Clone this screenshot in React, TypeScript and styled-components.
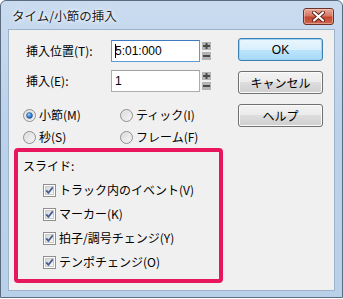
import React from "react";
import styled, { createGlobalStyle } from "styled-components";

const Global = createGlobalStyle`
  html, body { margin: 0; padding: 0; background: #ffffff; }
  body { font-family: "Noto Sans CJK JP", "Noto Sans", sans-serif; }
`;

const FONT = `"Noto Sans CJK JP", "Noto Sans", sans-serif`;

const Window = styled.div`
  box-sizing: border-box;
  width: 343px;
  height: 298px;
  display: flex;
  flex-direction: column;
  border: 1px solid #5b6b80;
  border-radius: 6px 6px 0 0;
  background: linear-gradient(to bottom, #c9dbef 0%, #bcd2ea 40%, #b9d0e9 100%);
`;

const TitleBar = styled.div`
  height: 28px;
  flex: none;
  display: flex;
  align-items: center;
  justify-content: space-between;
  padding: 0 8px 0 11px;
`;

const Title = styled.span`
  font-family: ${FONT};
  font-size: 12.5px;
  line-height: 16px;
  color: #1e1e1e;
  margin-top: 2px;
  text-shadow: 0 0 6px #ffffff, 0 0 3px #ffffff;
`;

const CloseButton = styled.div`
  box-sizing: border-box;
  width: 31px;
  height: 17px;
  margin-top: 2px;
  border: 1px solid #6b3229;
  border-radius: 3px;
  background: linear-gradient(to bottom, #e9a99b 0%, #d67763 45%, #c4452e 55%, #cf6650 100%);
  box-shadow: inset 0 0 0 1px rgba(255, 220, 210, 0.45);
  display: flex;
  align-items: center;
  justify-content: center;
`;

const Client = styled.div`
  flex: 1;
  margin: 0 7px 6px 7px;
  border: 1px solid #9fb3ca;
  background: #f0f0f0;
  display: flex;
  flex-direction: row;
  font-family: ${FONT};
  font-size: 12px;
  color: #000;
`;

const LeftCol = styled.div`
  width: 209px;
  padding: 10px 0 0 5px;
  display: flex;
  flex-direction: column;
`;

const FieldRow = styled.div<{ $top?: number }>`
  display: flex;
  align-items: center;
  height: 22px;
  margin-top: ${(p) => p.$top ?? 0}px;
  padding-left: 12px;
`;

const Label = styled.span`
  width: 85px;
  line-height: 16px;
  white-space: nowrap;
`;

const Input = styled.div<{ $focused?: boolean }>`
  box-sizing: border-box;
  width: 89px;
  height: 22px;
  background: #ffffff;
  border: 1px solid ${(p) => (p.$focused ? "#5b9bd8" : "#abadb3")};
  border-top-color: ${(p) => (p.$focused ? "#3d7bc0" : "#9ea0a6")};
  display: flex;
  align-items: center;
  padding-left: 3px;
  font-family: "Liberation Sans", "Noto Sans", sans-serif;
  font-size: 12px;
  line-height: 14px;
`;

const Caret = styled.span`
  display: inline-block;
  width: 1px;
  height: 14px;
  background: #000;
  margin-right: -1px;
`;

const SpinBox = styled.div`
  margin-left: 2px;
  width: 9px;
  height: 18px;
  display: flex;
`;

const RadioGrid = styled.div`
  display: grid;
  grid-template-columns: 97px 90px;
  grid-auto-rows: 22px;
  margin-top: 12px;
  padding-left: 9px;
`;

const OptionLabel = styled.label`
  display: flex;
  align-items: center;
  gap: 3px;
  line-height: 16px;
  white-space: nowrap;
`;

const Group = styled.div`
  box-sizing: border-box;
  margin-top: 0;
  width: 209px;
  height: 135px;
  border: 4px solid #e8175d;
  border-radius: 4px;
  padding: 6px 0 0 5px;
  display: flex;
  flex-direction: column;
`;

const GroupTitle = styled.span`
  line-height: 16px;
  height: 16px;
  margin-bottom: 4px;
`;

const CheckRow = styled.label`
  display: flex;
  align-items: center;
  gap: 3px;
  height: 24px;
  padding-left: 20px;
  line-height: 16px;
  white-space: nowrap;
`;

const RightCol = styled.div`
  margin-left: 15px;
  padding-top: 8px;
  display: flex;
  flex-direction: column;
  gap: 10px;
`;

const Button = styled.div<{ $default?: boolean }>`
  box-sizing: border-box;
  width: 85px;
  height: 23px;
  border: 1px solid ${(p) => (p.$default ? "#3c7fb1" : "#707070")};
  border-radius: 3px;
  background: ${(p) =>
    p.$default
      ? "linear-gradient(to bottom, #eaf6fd 0%, #d9f0fc 50%, #bee6fd 50%, #a7d9f5 100%)"
      : "linear-gradient(to bottom, #f2f2f2 0%, #ebebeb 50%, #dddddd 50%, #cfcfcf 100%)"};
  box-shadow: inset 0 0 0 1px ${(p) => (p.$default ? "#9fd3f3" : "#fbfbfb")};
  display: flex;
  align-items: center;
  justify-content: center;
  font-family: ${FONT};
  font-size: 12px;
  line-height: 16px;
  color: #000;
`;

const OkText = styled.span`
  font-family: "Liberation Sans", "Noto Sans", sans-serif;
  font-size: 12px;
`;

const Spinner = () => (
  <svg width="9" height="18" viewBox="0 0 9 18">
    <rect x="0" y="0" width="9" height="8" fill="#b4b4b4" />
    <rect x="1" y="3" width="7" height="2" fill="#4a4a4a" />
    <rect x="3.5" y="1" width="2" height="6" fill="#4a4a4a" />
    <rect x="0" y="10" width="9" height="8" fill="#b4b4b4" />
    <rect x="1" y="13" width="7" height="2" fill="#4a4a4a" />
  </svg>
);

const CloseX = () => (
  <svg width="13" height="11" viewBox="0 0 13 11">
    <path
      d="M2 1.5 L11 9.5 M11 1.5 L2 9.5"
      stroke="#5a2018"
      strokeWidth="4"
      strokeLinecap="round"
    />
    <path
      d="M2 1.5 L11 9.5 M11 1.5 L2 9.5"
      stroke="#ffffff"
      strokeWidth="2.2"
      strokeLinecap="round"
    />
  </svg>
);

const Radio = ({ checked }: { checked?: boolean }) => (
  <svg width="13" height="13" viewBox="0 0 13 13">
    <defs>
      <linearGradient id="rbg" x1="0" y1="0" x2="1" y2="1">
        <stop offset="0" stopColor="#d6d6d6" />
        <stop offset="1" stopColor="#fbfbfb" />
      </linearGradient>
      <radialGradient id="rdot" cx="0.4" cy="0.35" r="0.7">
        <stop offset="0" stopColor="#a6d4f8" />
        <stop offset="0.5" stopColor="#3a86d6" />
        <stop offset="1" stopColor="#1c4f96" />
      </radialGradient>
    </defs>
    <circle cx="6.5" cy="6.5" r="6" fill="url(#rbg)" stroke="#8e8f8f" strokeWidth="1" />
    <circle cx="6.5" cy="6.5" r="4.5" fill="none" stroke="#e8e8e8" strokeWidth="1" />
    {checked && <circle cx="6.5" cy="6.5" r="3" fill="url(#rdot)" stroke="#27528e" strokeWidth="0.5" />}
  </svg>
);

const Check = () => (
  <svg width="13" height="13" viewBox="0 0 13 13">
    <defs>
      <linearGradient id="cbg" x1="0" y1="0" x2="1" y2="1">
        <stop offset="0" stopColor="#d4d4d4" />
        <stop offset="1" stopColor="#fafafa" />
      </linearGradient>
    </defs>
    <rect x="0.5" y="0.5" width="12" height="12" fill="#ffffff" stroke="#8e8f8f" />
    <rect x="2.5" y="2.5" width="8" height="8" fill="url(#cbg)" stroke="#c9c9c9" />
    <path d="M3.2 6.4 L5.4 8.9 L9.8 3.4" fill="none" stroke="#4a5f97" strokeWidth="1.8" />
  </svg>
);

export default function App() {
  return (
    <>
      <Global />
      <Window>
        <TitleBar>
          <Title>タイム/小節の挿入</Title>
          <CloseButton>
            <CloseX />
          </CloseButton>
        </TitleBar>
        <Client>
          <LeftCol>
            <FieldRow>
              <Label>挿入位置(T):</Label>
              <Input $focused>
                <Caret />
                5:01:000
              </Input>
              <SpinBox>
                <Spinner />
              </SpinBox>
            </FieldRow>
            <FieldRow $top={8}>
              <Label>挿入(E):</Label>
              <Input>1</Input>
              <SpinBox>
                <Spinner />
              </SpinBox>
            </FieldRow>
            <RadioGrid>
              <OptionLabel>
                <Radio checked />
                小節(M)
              </OptionLabel>
              <OptionLabel>
                <Radio />
                ティック(I)
              </OptionLabel>
              <OptionLabel>
                <Radio />
                秒(S)
              </OptionLabel>
              <OptionLabel>
                <Radio />
                フレーム(F)
              </OptionLabel>
            </RadioGrid>
            <Group>
              <GroupTitle>スライド:</GroupTitle>
              <CheckRow>
                <Check />
                トラック内のイベント(V)
              </CheckRow>
              <CheckRow>
                <Check />
                マーカー(K)
              </CheckRow>
              <CheckRow>
                <Check />
                拍子/調号チェンジ(Y)
              </CheckRow>
              <CheckRow>
                <Check />
                テンポチェンジ(O)
              </CheckRow>
            </Group>
          </LeftCol>
          <RightCol>
            <Button $default>
              <OkText>OK</OkText>
            </Button>
            <Button>キャンセル</Button>
            <Button>ヘルプ</Button>
          </RightCol>
        </Client>
      </Window>
    </>
  );
}
